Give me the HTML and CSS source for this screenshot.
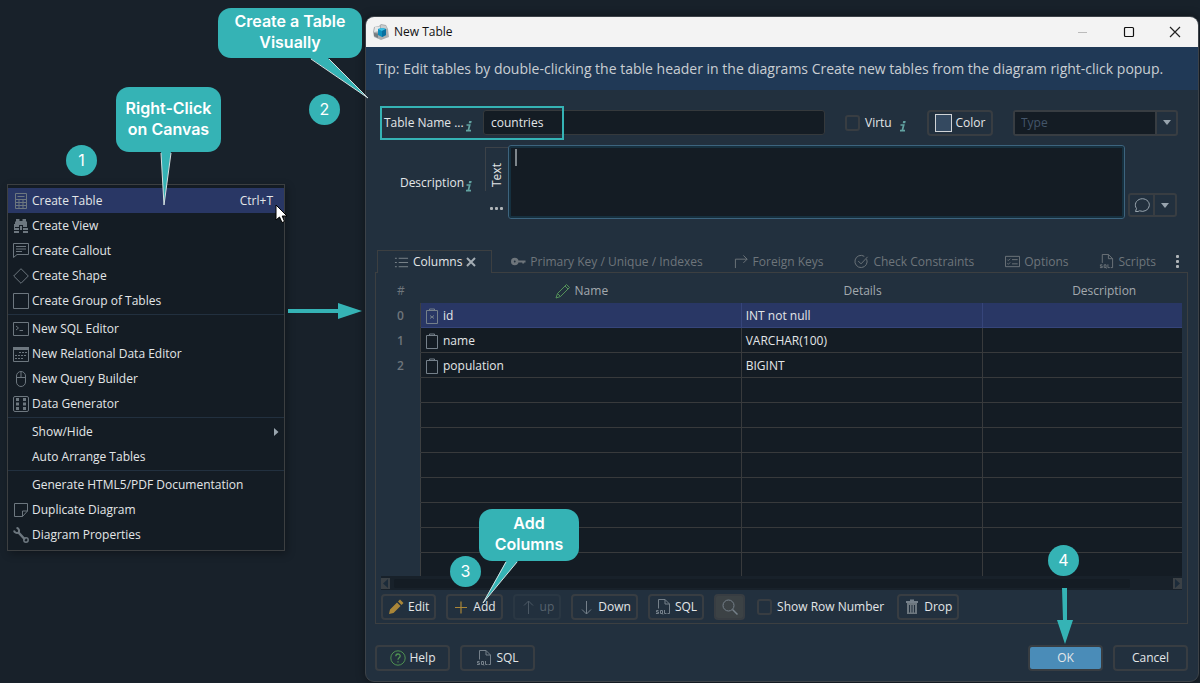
FILE: index.html
```html
<!DOCTYPE html>
<html lang="en">
<head>
    <meta charset="UTF-8">
    <meta name="viewport" content="width=device-width, initial-scale=1.0">
    <title>New Table</title>
    <link rel="stylesheet" href="styles.css">
</head>
<body>
    <!-- shared icons -->
    <svg class="defs" width="0" height="0">
        <symbol id="i-sql" viewBox="0 0 16 16">
            <path d="M3.500 9.500V.500H10L14.500 5V14.500H12.500M10 .500V5H14.500" fill="none" stroke="currentColor"/>
            <path d="M3.500 11.500H1.500V13H3.500V14.500H1M5.500 11.500H7.500V14.500H5.500ZM7 14L8 15.500M9.500 11V14.500H11.500" fill="none" stroke="currentColor"/>
        </symbol>
        <symbol id="i-info" viewBox="0 0 8 12">
            <path d="M4.200 1H6.700L6.200 3.200H3.700Z" fill="currentColor"/>
            <path d="M1.500 5H4.700L3.300 10.500M1 10.700H6" fill="none" stroke="currentColor" stroke-width="1.700"/>
        </symbol>
        <symbol id="i-down" viewBox="0 0 8 5">
            <path d="M0 0H8L4 5Z" fill="currentColor"/>
        </symbol>
        <symbol id="i-col" viewBox="0 0 14 16">
            <path d="M1.500 2.500H12.500V15.500H1.500ZM4.500 2.500V1H9.500V2.500" fill="none" stroke="currentColor"/>
        </symbol>
    </svg>

    <div class="desktop">
        <ul class="menu">
            <li class="item active">
                <svg viewBox="0 0 16 16"><path d="M2.500.500H13.500V15.500H2.500ZM2.500 6.500H13.500M2.500 9.500H13.500M2.500 12.500H13.500M6 6.500V15.500M10 6.500V15.500M4.500 3.500H11.500"/></svg>
                <span>Create Table</span><kbd>Ctrl+T</kbd>
            </li>
            <li class="item">
                <svg viewBox="0 0 16 16"><path class="solid" d="M3 1H6.500V3H9.500V1H13V3L14 4V9H10V7H6V9H2V4L3 3ZM1 6H2V10H6V12H1ZM10 10H15V12H10ZM1 13H6V15H1ZM10 13H15V15H10ZM7 8H9V12H7Z"/></svg>
                <span>Create View</span>
            </li>
            <li class="item">
                <svg viewBox="0 0 16 16"><path d="M.500.500H15.500V11.500H4L.500 14.500ZM3 3.500H13M3 6H13M3 8.500H9"/></svg>
                <span>Create Callout</span>
            </li>
            <li class="item">
                <svg viewBox="0 0 16 16"><path d="M8 .700L15.300 8L8 15.300L.700 8Z"/></svg>
                <span>Create Shape</span>
            </li>
            <li class="item">
                <svg viewBox="0 0 16 16"><path d="M.500.500H15.500V15.500H.500Z"/></svg>
                <span>Create Group of Tables</span>
            </li>
            <li class="line"></li>
            <li class="item">
                <svg viewBox="0 0 16 16"><path d="M.500 1.500H15.500V14.500H.500ZM3 5L5.500 7L3 9M6.500 9.500H10"/></svg>
                <span>New SQL Editor</span>
            </li>
            <li class="item">
                <svg viewBox="0 0 16 16"><path d="M.500 1.500H15.500V15.500H.500Z"/><path class="solid" d="M0 1H16V4H0Z"/><path d="M6 6.500H14M2 9.500H14M2 12.500H11" stroke-dasharray="2 1"/></svg>
                <span>New Relational Data Editor</span>
            </li>
            <li class="item">
                <svg viewBox="0 0 16 16"><rect x="3.500" y=".500" width="9" height="15" rx="4.500"/><path d="M3.500 6.500H12.500M8 .500V6.500"/></svg>
                <span>New Query Builder</span>
            </li>
            <li class="item">
                <svg viewBox="0 0 16 16"><rect x=".500" y=".500" width="15" height="15" rx="1.500"/><path d="M3 3.500H6M3 8H6M3 12.500H6M10 3.500H13M10 8H13M10 12.500H13" stroke-width="3"/></svg>
                <span>Data Generator</span>
            </li>
            <li class="line"></li>
            <li class="item">
                <i></i><span>Show/Hide</span>
                <svg class="sub" viewBox="0 0 5 8"><path class="solid" d="M0 0L4.500 4L0 8Z"/></svg>
            </li>
            <li class="item"><i></i><span>Auto Arrange Tables</span></li>
            <li class="line"></li>
            <li class="item"><i></i><span>Generate HTML5/PDF Documentation</span></li>
            <li class="item">
                <svg viewBox="0 0 16 16"><path d="M1.500 1.500H14.500V9L9.500 14.500H1.500ZM14.500 9H9.500V14.500"/></svg>
                <span>Duplicate Diagram</span>
            </li>
            <li class="item">
                <svg viewBox="0 0 16 16"><path d="M5 5L12 12.500" stroke-width="2.500"/><path d="M1 3.500A3 3 0 0 0 5.500 5.500A3 3 0 0 0 3.500 .800" stroke-width="2"/><circle cx="13" cy="13" r="2.200" stroke-width="1.500"/></svg>
                <span>Diagram Properties</span>
            </li>
        </ul>

        <div class="dialog">
            <div class="titlebar">
                <svg class="logo" viewBox="0 0 16 16">
                    <path d="M1 3L6 2L8 0L13 1L15 5L16 13L8 16L1 13L0 8Z" fill="#a9adb0"/>
                    <path d="M2 3L7 2.500V7L1 8Z" fill="#e4e6e7"/><path d="M8 1L13 2L14 5L8 4Z" fill="#c9cccd"/>
                    <path d="M1 9L5 9.500V14L1 12Z" fill="#777d80"/>
                    <path d="M5 5L9 4L13 5V11L9 13L5 11Z" fill="#0c8fbd"/><path d="M5 5L9 4L13 5L9 7Z" fill="#3cc0e6"/><path d="M9 7L13 5V11L9 13Z" fill="#0870a0"/>
                </svg>
                <span class="title">New Table</span>
                <svg class="win" viewBox="0 0 12 12"><path d="M1 6.500H10" stroke="#bbb"/></svg>
                <svg class="win" viewBox="0 0 12 12"><rect x="1.500" y="1.500" width="9" height="9" rx="1" fill="none" stroke="#111" stroke-width="1.200"/></svg>
                <svg class="win" viewBox="0 0 12 12"><path d="M1 1L11 11M11 1L1 11" stroke="#222" stroke-width="1.200"/></svg>
            </div>
            <p class="tip">Tip: Edit tables by double-clicking the table header in the diagrams Create new tables from the diagram right-click popup.</p>

            <div class="form">
                <div class="row">
                    <label class="name-label" for="name">Table Name ...</label>
                    <svg class="info"><use href="#i-info"/></svg>
                    <input type="text" id="name" class="field" value="countries">
                    <label class="check virtual"><input type="checkbox">Virtu</label>
                    <svg class="info"><use href="#i-info"/></svg>
                    <button class="btn color"><span class="swatch"></span>Color</button>
                    <div class="combo">
                        <select aria-label="Type"><option>Type</option></select>
                        <span class="drop"><svg><use href="#i-down"/></svg></span>
                    </div>
                </div>
                <div class="row desc">
                    <label class="desc-label" for="desc">Description</label>
                    <svg class="info"><use href="#i-info"/></svg>
                    <div class="side">
                        <span class="side-tab">Text</span>
                        <span class="dots"></span>
                    </div>
                    <div class="area">
                        <textarea id="desc"></textarea>
                        <span class="caret"></span>
                    </div>
                    <div class="split">
                        <button aria-label="Comment"><svg class="bubble" viewBox="0 0 16 16"><path d="M1.500 14.500L2.500 11.500A7 6.300 0 1 1 5.500 13.800L4 14.500Z" fill="none" stroke="currentColor"/></svg></button>
                        <button aria-label="More"><svg class="arrow"><use href="#i-down"/></svg></button>
                    </div>
                </div>
            </div>

            <div class="tabs">
                <button class="tab current">
                    <svg viewBox="0 0 16 16"><path d="M1 3.500H3M5 3.500H15M1 8H3M5 8H15M1 12.500H3M5 12.500H15"/></svg>Columns
                    <svg class="close" viewBox="0 0 10 10"><path d="M1 1L9 9M9 1L1 9" stroke-width="2"/></svg>
                </button>
                <button class="tab">
                    <svg viewBox="0 0 16 16"><circle cx="4" cy="8" r="2.500" stroke-width="3"/><path d="M6 8H15.500M13 8V10" stroke-width="2"/></svg>Primary Key / Unique / Indexes
                </button>
                <button class="tab">
                    <svg viewBox="0 0 16 16"><path d="M1.500 15V5.500H14M10 1.500L14 5.500L10 9.500"/></svg>Foreign Keys
                </button>
                <button class="tab">
                    <svg viewBox="0 0 16 16"><path d="M13.500 5.500A6.500 6.500 0 1 1 11 2.500M4.500 7.500L7.500 10.500L14.500 3"/></svg>Check Constraints
                </button>
                <button class="tab">
                    <svg viewBox="0 0 16 16"><path d="M.500 2.500H15.500V13.500H.500ZM2.500 6L3.500 7L5.500 5M7.500 6H13.500M2.500 10L3.500 11L5.500 9M7.500 10.500H13.500"/></svg>Options
                </button>
                <button class="tab">
                    <svg><use href="#i-sql"/></svg>Scripts
                </button>
                <span class="kebab"></span>
            </div>

            <div class="panel">
                <div class="grid">
                    <table>
                        <colgroup><col class="c-num"><col class="c-name"><col class="c-det"><col class="c-desc"></colgroup>
                        <thead>
                            <tr>
                                <th>#</th>
                                <th><svg class="pencil" viewBox="0 0 16 16"><path d="M1 15L2.500 10.500L11.500 1.500L14.500 4.500L5.500 13.500ZM2.500 10.500L5.500 13.500M10 3L13 6" fill="none" stroke="#549159"/></svg>Name</th>
                                <th>Details</th>
                                <th>Description</th>
                            </tr>
                        </thead>
                        <tbody>
                            <tr class="selected"><th>0</th><td><svg class="col-icon" viewBox="0 0 14 16"><use href="#i-col"/><path d="M5 7.500L9 10.500M9 7.500L5 10.500" stroke="currentColor"/></svg>id</td><td>INT not null</td><td></td></tr>
                            <tr><th>1</th><td><svg class="col-icon"><use href="#i-col"/></svg>name</td><td>VARCHAR(100)</td><td></td></tr>
                            <tr><th>2</th><td><svg class="col-icon"><use href="#i-col"/></svg>population</td><td>BIGINT</td><td></td></tr>
                            <tr><th></th><td></td><td></td><td></td></tr>
                            <tr><th></th><td></td><td></td><td></td></tr>
                            <tr><th></th><td></td><td></td><td></td></tr>
                            <tr><th></th><td></td><td></td><td></td></tr>
                            <tr><th></th><td></td><td></td><td></td></tr>
                            <tr><th></th><td></td><td></td><td></td></tr>
                            <tr><th></th><td></td><td></td><td></td></tr>
                            <tr class="last"><th></th><td></td><td></td><td></td></tr>
                        </tbody>
                    </table>
                </div>
                <div class="scroll">
                    <svg viewBox="0 0 9 11"><rect width="9" height="11" fill="#3b4146"/><path d="M7 1V10L2 5.500Z" fill="#1b2b3a"/></svg>
                    <span class="thumb"></span>
                    <svg viewBox="0 0 9 11"><rect width="9" height="11" fill="#3b4146"/><path d="M2 1V10L7 5.500Z" fill="#1b2b3a"/></svg>
                </div>
                <div class="toolbar">
                    <button class="btn"><svg class="gold" viewBox="0 0 16 16"><path class="solid" d="M1 15L2 10.500L9 3.500L12.500 7L5.500 14ZM10 2.500L12 .500L15.500 4L13.500 6Z"/></svg>Edit</button>
                    <button class="btn"><svg class="gold" viewBox="0 0 16 16"><path d="M8 2.500V14.500M2 8.500H14" stroke-width="1.200"/></svg>Add</button>
                    <button class="btn up" disabled><svg viewBox="0 0 16 16"><path d="M8.500 15V2M4 6.500L8.500 2L13 6.500"/></svg>up</button>
                    <button class="btn"><svg viewBox="0 0 16 16"><path d="M8.500 2V15M4 10.500L8.500 15L13 10.500"/></svg>Down</button>
                    <button class="btn"><svg><use href="#i-sql"/></svg>SQL</button>
                    <button class="btn find" aria-label="Find"><svg viewBox="0 0 16 16"><circle cx="6.500" cy="6.500" r="5.500"/><path d="M10.500 10.500L15.500 15.500" stroke-width="1.500"/></svg></button>
                    <label class="check rows"><input type="checkbox">Show Row Number</label>
                    <button class="btn"><svg viewBox="0 0 16 16"><path d="M2 3H14M6 1.500H10" stroke-width="2"/><path class="solid" d="M3 4H13V15H3Z"/><path d="M5.500 6V13.500M8 6V13.500M10.500 6V13.500" stroke="#22303e"/></svg>Drop</button>
                </div>
            </div>

            <div class="footer">
                <button class="btn"><svg class="green" viewBox="0 0 16 16"><circle cx="8" cy="8" r="7.200"/><path d="M5.800 6.200C5.800 3.300 10.200 3.300 10.200 6C10.200 7.800 8 7.800 8 9.800M8 11.200V12.600" stroke-width="1.300"/></svg>Help</button>
                <button class="btn"><svg><use href="#i-sql"/></svg>SQL</button>
                <button class="btn ok">OK</button>
                <button class="btn">Cancel</button>
            </div>
        </div>

        <!-- annotations over the windows -->
        <span class="step one">1</span>
        <span class="step two">2</span>
        <span class="step three">3</span>
        <span class="step four">4</span>
        <div class="frame"></div>

        <div class="callout canvas">Right-Click<br>on Canvas
            <svg width="14" height="56" viewBox="0 0 14 56"><path d="M1 0L4 53L11 0Z"/><path class="edge" d="M1 1L4 53L11 1"/></svg>
        </div>
        <div class="callout visual">Create a Table<br>Visually
            <svg width="62" height="42" viewBox="0 0 62 42"><path d="M2 0L60 40L20 0Z"/><path class="edge" d="M3 1L60 40L21 1"/></svg>
        </div>
        <div class="callout columns">Add<br>Columns
            <svg width="38" height="44" viewBox="0 0 38 44"><path d="M24 0L1 42L36 0Z"/><path class="edge" d="M24 1L1 42L35 1"/></svg>
        </div>
        <svg class="to-dialog" viewBox="0 0 74 16"><path d="M0 6H50V0L74 8L50 16V10H0Z"/></svg>
        <svg class="to-ok" viewBox="0 0 16 56"><path d="M5 0H10V32H16L8 56L0 32H6Z"/></svg>
        <svg class="cursor" viewBox="0 0 13 20"><path d="M1 1V16L4.500 13L7 18.500L9.500 17.500L7.200 12H12Z" fill="#fff" stroke="#000"/></svg>
    </div>
</body>
</html>
```

FILE: styles.css
```css
* {
    box-sizing: border-box;
}
body {
    margin: 0;
    background: #18212a;
    color: #e3e6e8;
    font-family: "Open Sans", "Noto Sans", sans-serif;
    font-size: 12px;
    line-height: 16px;
}
button, input, select, textarea {
    font: inherit;
    color: inherit;
    margin: 0;
}
.defs {
    position: absolute;
}
.desktop {
    position: relative;
    display: flex;
    align-items: flex-start;
    gap: 80px;
    min-height: 100vh;
    padding: 16px 1px 2px 7px;
}

/* context menu */
.menu {
    flex: none;
    width: 278px;
    margin: 168px 0 0;
    padding: 3px 0;
    list-style: none;
    background: #141c24;
    border: 1px solid #3c3f41;
    box-shadow: 2px 3px 8px rgba(0, 0, 0, 0.3);
}
.item {
    display: flex;
    align-items: center;
    gap: 3px;
    height: 25px;
    padding: 0 11px 0 5px;
}
.item svg, .item i {
    width: 16px;
    height: 16px;
    fill: none;
    stroke: #6d777f;
}
.item .solid, .btn .solid {
    fill: #6d777f;
    stroke: none;
}
.item kbd {
    margin-left: auto;
    font: inherit;
}
.item .sub {
    width: 5px;
    height: 8px;
    margin-left: auto;
    margin-right: -6px;
}
.item .sub .solid {
    fill: #9aa5ae;
}
.active {
    background: #293765;
}
.line {
    height: 1px;
    margin: 1px 0;
    background: #22303f;
}

/* dialog */
.dialog {
    flex: 1;
    min-width: 0;
    background: #22303e;
    border: 1px solid #3c4248;
    border-radius: 9px;
    overflow: hidden;
    box-shadow: 0 0 10px rgba(0, 0, 0, 0.4);
}
.titlebar {
    display: flex;
    align-items: center;
    gap: 34px;
    height: 30px;
    padding: 0 17px 0 7px;
    background: #f3f3f3;
    color: #111;
}
.logo {
    width: 16px;
    height: 16px;
}
.title {
    flex: 1;
    margin-left: -29px;
}
.win {
    width: 12px;
    height: 12px;
}
.tip {
    margin: 0;
    padding: 12px 10px 11px;
    background: #203956;
    color: #c9ced3;
    font-size: 14px;
    line-height: 20px;
    white-space: nowrap;
}
.form {
    padding: 20px 20px 0 18px;
}
.row {
    display: flex;
    align-items: center;
    height: 25px;
}
.info {
    width: 8px;
    height: 12px;
    margin-top: 6px;
    color: #62a3a2;
}
.name-label {
    width: 81px;
    white-space: nowrap;
}
.name-label + .info {
    margin-right: 10px;
}
.field {
    flex: 1;
    min-width: 0;
    height: 25px;
    padding: 0 7px;
    background: #141c24;
    border: 1px solid #35393c;
    border-radius: 3px;
}
.check {
    display: flex;
    align-items: center;
    gap: 5px;
    white-space: nowrap;
}
.check input {
    appearance: none;
    width: 15px;
    height: 16px;
    border: 2px solid #383d42;
    border-radius: 3px;
}
.virtual {
    width: 53px;
    margin: 0 1px 0 20px;
}
.btn {
    display: flex;
    align-items: center;
    justify-content: center;
    gap: 4px;
    height: 26px;
    padding: 0 5px;
    background: #22303e;
    border: 2px solid #383d42;
    border-radius: 4px;
    white-space: nowrap;
}
.btn svg {
    flex: none;
    width: 16px;
    height: 16px;
    fill: none;
    stroke: #75808a;
    color: #75808a;
}
.btn use {
    stroke: none;
}
.btn .gold {
    stroke: #aa8638;
}
.btn .gold .solid {
    fill: #aa8638;
}
.btn .green {
    stroke: #4f9152;
}
.color {
    width: 66px;
    margin: 0 20px;
}
.swatch {
    width: 17px;
    height: 18px;
    background: #344960;
    border: 1px solid #d0d3d6;
}
.combo {
    display: flex;
    width: 165px;
    height: 26px;
    border: 2px solid #383d42;
    border-radius: 3px;
}
.combo select {
    flex: 1;
    appearance: none;
    padding: 0 6px;
    background: #141c24;
    color: #43556a;
    border: 0;
}
.drop {
    display: grid;
    place-items: center;
    width: 21px;
    border-left: 2px solid #383d42;
}
.drop svg, .arrow {
    width: 8px;
    height: 5px;
    color: #98a4ae;
}
.desc {
    align-items: flex-start;
    height: 74px;
    margin-top: 10px;
}
.desc-label {
    width: 81px;
    margin-top: 30px;
    padding-right: 1px;
    text-align: right;
}
.desc .info {
    margin: 35px 12px 0 0;
}
.side {
    display: flex;
    flex-direction: column;
    align-items: center;
    width: 23px;
    padding-top: 2px;
}
.side-tab {
    width: 23px;
    height: 44px;
    padding-top: 4px;
    border: 1px solid #3c4248;
    border-width: 0 1px 1px 0;
    line-height: 22px;
    writing-mode: vertical-rl;
    transform: rotate(180deg);
}
.dots, .kebab {
    width: 3px;
    height: 3px;
    border-radius: 1px;
    background: #b0b5b9;
    box-shadow: -5px 0 #b0b5b9, 5px 0 #b0b5b9;
}
.dots {
    margin-top: 16px;
}
.area {
    position: relative;
    flex: 1;
    height: 74px;
}
.area textarea {
    display: block;
    width: 100%;
    height: 100%;
    resize: none;
    background: #141c24;
    border: 1px solid #3d647e;
    border-radius: 3px;
    box-shadow: inset 0 0 0 2px #16303f;
}
.caret {
    position: absolute;
    left: 7px;
    top: 4px;
    width: 2px;
    height: 17px;
    background: #7e868c;
}
.split {
    display: flex;
    align-self: flex-end;
    margin: 0 1px 2px 3px;
    border: 2px solid #383d42;
    border-radius: 3px;
}
.split button {
    display: grid;
    place-items: center;
    width: 23px;
    height: 20px;
    padding: 0;
    background: none;
    border: 0;
    color: #98a4ae;
}
.split button + button {
    width: 22px;
    border-left: 2px solid #383d42;
}
.bubble {
    width: 16px;
    height: 16px;
}

/* tabs */
.tabs {
    display: flex;
    justify-content: space-between;
    height: 22px;
    margin: 31px 19px 0 11px;
}
.tab {
    display: flex;
    align-items: center;
    gap: 4px;
    padding: 1px 0 0;
    background: none;
    border: 0;
    color: #6e757b;
    white-space: nowrap;
}
.tab svg {
    width: 15px;
    height: 15px;
    fill: none;
    stroke: currentColor;
}
.tab use {
    stroke: none;
}
.current {
    position: relative;
    z-index: 1;
    height: 23px;
    margin-right: -12px;
    padding: 0 15px 0 16px;
    background: #22303e;
    border: 1px solid #3c3f41;
    border-bottom: 0;
    color: #e3e6e8;
}
.tab.current svg {
    stroke: #7d868d;
}
.tab.current .close {
    width: 10px;
    height: 10px;
    stroke: #a4adb4;
}
.kebab {
    align-self: center;
    margin-left: -11px;
    box-shadow: 0 -5px #b0b5b9, 0 5px #b0b5b9;
}
.panel {
    margin: 0 10px 0 9px;
    padding: 0 5px 3px 5px;
    border: 1px solid #3c3f41;
}

/* columns grid */
.grid {
    overflow: hidden;
}
.grid table {
    width: calc(100% + 43px);
    table-layout: fixed;
    border-collapse: separate;
    border-spacing: 0;
}
.c-num {
    width: 40px;
}
.c-name {
    width: 38%;
}
.grid th, .grid td {
    height: 25px;
    padding: 2px 4px 0;
    font-weight: normal;
    text-align: left;
    white-space: nowrap;
}
.grid th {
    color: #6e757b;
    text-align: center;
}
.grid thead th {
    height: 30px;
    padding-top: 6px;
    color: #a3a9ae;
}
.grid thead th:first-child {
    color: #6e757b;
}
.grid tbody th {
    border-right: 1px solid #3c3f41;
    border-bottom: 1px solid transparent;
    font-weight: 600;
}
.grid td {
    background: #141c24;
    border-right: 1px solid #383a3c;
    border-bottom: 1px solid #383a3c;
}
.grid .selected td {
    background: #293765;
    border-color: #36457a;
}
.grid .last th, .grid .last td {
    height: 23px;
    border-bottom: 0;
}
.col-icon {
    width: 14px;
    height: 16px;
    margin-right: 4px;
    color: #75808a;
    vertical-align: middle;
}
.pencil {
    width: 16px;
    height: 16px;
    margin-right: 4px;
    vertical-align: middle;
}
.scroll {
    display: flex;
    align-items: center;
    justify-content: space-between;
    height: 14px;
    background: #18212a;
}
.scroll svg {
    width: 9px;
    height: 11px;
}
.thumb {
    flex: 1;
    height: 9px;
    margin: 0 43px 0 4px;
    background: #141c24;
    border-radius: 2px;
}
.toolbar {
    display: flex;
    align-items: center;
    gap: 10px;
    padding-top: 4px;
}
.up {
    border-color: #2a3743;
    color: #56626d;
}
.up svg {
    opacity: 0.5;
}
.find {
    width: 31px;
    background: #3c4245;
}
.rows {
    margin: 0 3px 0 2px;
}
.footer {
    display: flex;
    gap: 10px;
    padding: 21px 10px 10px 9px;
}
.footer .btn {
    width: 75px;
}
.footer .ok {
    margin-left: auto;
    background: #4a8cb8;
}

/* annotations */
.step {
    position: absolute;
    width: 31px;
    height: 31px;
    border-radius: 50%;
    background: #35b3b5;
    color: #fff;
    font-family: Inter, sans-serif;
    font-size: 16px;
    line-height: 31px;
    text-align: center;
}
.one {
    left: 66px;
    top: 145px;
}
.two {
    left: 309px;
    top: 94px;
}
.three {
    left: 450px;
    top: 556px;
}
.four {
    right: 121px;
    top: 545px;
}
.frame {
    position: absolute;
    left: 380px;
    top: 106px;
    width: 184px;
    height: 34px;
    border: 2px solid #35b3b5;
}
.callout {
    position: absolute;
    border-radius: 13px;
    background: #35b3b5;
    color: #fff;
    font-family: Inter, sans-serif;
    font-size: 16px;
    font-weight: 600;
    line-height: 21px;
    text-align: center;
    white-space: nowrap;
}
.callout svg {
    position: absolute;
    top: 100%;
    fill: #35b3b5;
}
.callout .edge {
    fill: none;
    stroke: #d5dfe0;
}
.canvas {
    left: 116px;
    top: 87px;
    width: 105px;
    padding: 11px 0 12px;
}
.canvas svg {
    left: 44px;
}
.visual {
    left: 218px;
    top: 8px;
    width: 144px;
    padding: 3px 0 5px;
}
.visual svg {
    left: 90px;
}
.columns {
    left: 479px;
    top: 509px;
    width: 100px;
    padding: 4px 0 6px;
}
.columns svg {
    left: 3px;
}
.to-dialog, .to-ok {
    position: absolute;
    fill: #35b3b5;
}
.to-dialog {
    left: 288px;
    top: 303px;
    width: 74px;
    height: 16px;
}
.to-ok {
    right: 127px;
    top: 588px;
    width: 16px;
    height: 56px;
}
.cursor {
    position: absolute;
    left: 275px;
    top: 204px;
    width: 13px;
    height: 20px;
}
```
